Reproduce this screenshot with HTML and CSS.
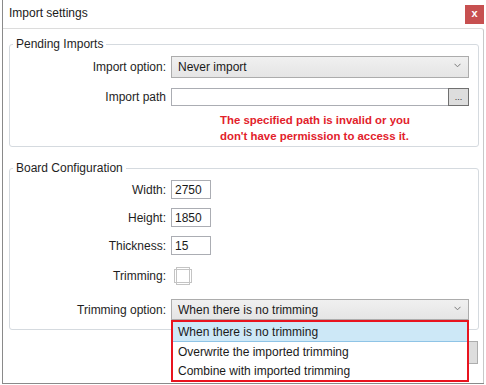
FILE: index.html
```html
<!DOCTYPE html>
<html>
<head>
<meta charset="utf-8">
<link rel="stylesheet" href="styles.css">
</head>
<body>
<div class="window">
  <div class="titlebar">
    <span class="title">Import settings</span>
    <span class="close">x</span>
  </div>
  <div class="content">
    <fieldset class="group g1">
      <legend>Pending Imports</legend>
      <div class="row r-combo">
        <span class="lbl">Import option:</span>
        <div class="combo">
          <span>Never import</span>
          <svg class="chev" width="7" height="5" viewBox="0 0 7 5"><path d="M0.5 0.8 L3.5 3.8 L6.5 0.8" fill="none" stroke="#7a7a7a" stroke-width="1"/></svg>
        </div>
      </div>
      <div class="row r-path">
        <span class="lbl">Import path</span>
        <div class="pathbox">
          <div class="textbox wide"></div>
          <div class="browse">...</div>
        </div>
      </div>
      <div class="error">The specified path is invalid or you<br>don't have permission to access it.</div>
    </fieldset>

    <fieldset class="group g2">
      <legend>Board Configuration</legend>
      <div class="row r-num first">
        <span class="lbl">Width:</span>
        <div class="textbox num">2750</div>
      </div>
      <div class="row r-num">
        <span class="lbl">Height:</span>
        <div class="textbox num">1850</div>
      </div>
      <div class="row r-num">
        <span class="lbl">Thickness:</span>
        <div class="textbox num">15</div>
      </div>
      <div class="row r-trim">
        <span class="lbl">Trimming:</span>
        <svg class="trimicon" width="20" height="20" viewBox="0 0 20 20">
          <rect x="1.5" y="3.5" width="17" height="13" fill="none" stroke="#c4c4c4"/>
          <rect x="3.5" y="1.5" width="13" height="17" fill="none" stroke="#c4c4c4"/>
        </svg>
      </div>
      <div class="row r-opt">
        <span class="lbl">Trimming option:</span>
        <div class="combo open">
          <span>When there is no trimming</span>
          <svg class="chev" width="7" height="5" viewBox="0 0 7 5"><path d="M0.5 0.8 L3.5 3.8 L6.5 0.8" fill="none" stroke="#7a7a7a" stroke-width="1"/></svg>
          <div class="dropdown">
            <div class="item selected">When there is no trimming</div>
            <div class="item">Overwrite the imported trimming</div>
            <div class="item">Combine with imported trimming</div>
          </div>
        </div>
      </div>
    </fieldset>

    <div class="footer">
      <div class="btn"></div>
    </div>
  </div>
</div>
</body>
</html>
```

FILE: styles.css
```css
* { box-sizing: border-box; }
html, body {
  margin: 0;
  padding: 0;
  background: #ffffff;
}
body {
  font-family: "Segoe UI", "Liberation Sans", Arial, sans-serif;
  font-size: 12px;
  color: #1e1e1e;
}
.window {
  margin-left: 2px;
  width: 482px;
  height: 384px;
  border-left: 1px solid #8a8a8a;
  border-bottom: 1px solid #8a8a8a;
  background: #fff;
  display: flex;
  flex-direction: column;
}
.titlebar {
  height: 28px;
  flex: none;
  display: flex;
  align-items: flex-start;
  justify-content: space-between;
  padding-left: 6px;
}
.title {
  margin-top: 5px;
  line-height: 16px;
  color: #1a1a1a;
}
.close {
  margin-top: 5px;
  width: 19px;
  height: 19px;
  background: #c75050;
  color: #fff;
  font-weight: bold;
  font-size: 11px;
  line-height: 17px;
  text-align: center;
}
.content {
  flex: 1;
  border-top: 1px solid #dcdcdc;
  border-right: 1px solid #c8c8c8;
  border-top-right-radius: 3px;
  display: flex;
  flex-direction: column;
}
.group {
  margin: 0 4px 0 6px;
  padding: 0 9px 0 0;
  border: 1px solid #d5dadf;
  border-radius: 3px;
  min-inline-size: 0;
}
.group legend {
  margin-left: 3px;
  padding: 0 3px;
  line-height: 16px;
  height: 16px;
  color: #1e1e1e;
}
.g1 { margin-top: 7px; padding-bottom: 2px; }
.g2 { margin-top: 13px; padding-bottom: 9px; }
.row {
  display: flex;
  align-items: center;
  gap: 5px;
}
.lbl {
  width: 156px;
  flex: none;
  text-align: right;
  color: #1e1e1e;
}
.r-combo { margin-top: 4px; height: 22px; }
.r-path { margin-top: 10px; height: 18px; }
.combo {
  position: relative;
  width: 298px;
  height: 100%;
  border: 1px solid #acacac;
  background: linear-gradient(#f0f0f0, #e5e5e5);
  display: flex;
  align-items: center;
  justify-content: space-between;
  padding: 0 7px 0 6px;
  color: #1a1a1a;
}
.chev { flex: none; margin-top: -3px; }
.pathbox {
  width: 298px;
  height: 100%;
  display: flex;
}
.textbox {
  border: 1px solid #abadb3;
  background: #fff;
  height: 100%;
  padding-left: 3px;
  display: flex;
  align-items: center;
  color: #1a1a1a;
}
.wide { flex: 1; }
.browse {
  width: 21px;
  height: 100%;
  flex: none;
  background: #dddddd;
  border: 1px solid #707070;
  margin-left: -1px;
  font-size: 9px;
  line-height: 16px;
  text-align: center;
  color: #333;
}
.error {
  margin-top: 6px;
  padding-left: 210px;
  line-height: 16px;
  font-size: 11.4px;
  font-weight: bold;
  color: #e2212b;
}
.r-num { margin-top: 9px; height: 19px; }
.r-num.first { margin-top: 4px; }
.num { width: 40px; }
.r-trim { margin-top: 11px; height: 20px; }
.trimicon { margin-left: 2px; flex: none; }
.r-opt { margin-top: 13px; height: 21px; }
.dropdown {
  position: absolute;
  left: -1px;
  top: 20px;
  width: 298px;
  border: 2px solid #e8141f;
  background: #fff;
  z-index: 5;
}
.item {
  height: 19px;
  line-height: 19px;
  padding: 1px 0 0 5px;
  color: #1a1a1a;
}
.item.selected {
  height: 20px;
  background: #cde8f7;
  border-bottom: 1px solid #8fc4e6;
  line-height: 19px;
  padding-top: 1px;
}
.footer {
  display: flex;
  justify-content: flex-end;
  padding-right: 5px;
  margin-top: 11px;
}
.btn {
  width: 75px;
  height: 23px;
  background: #dddddd;
  border: 1px solid #adadad;
}
```
